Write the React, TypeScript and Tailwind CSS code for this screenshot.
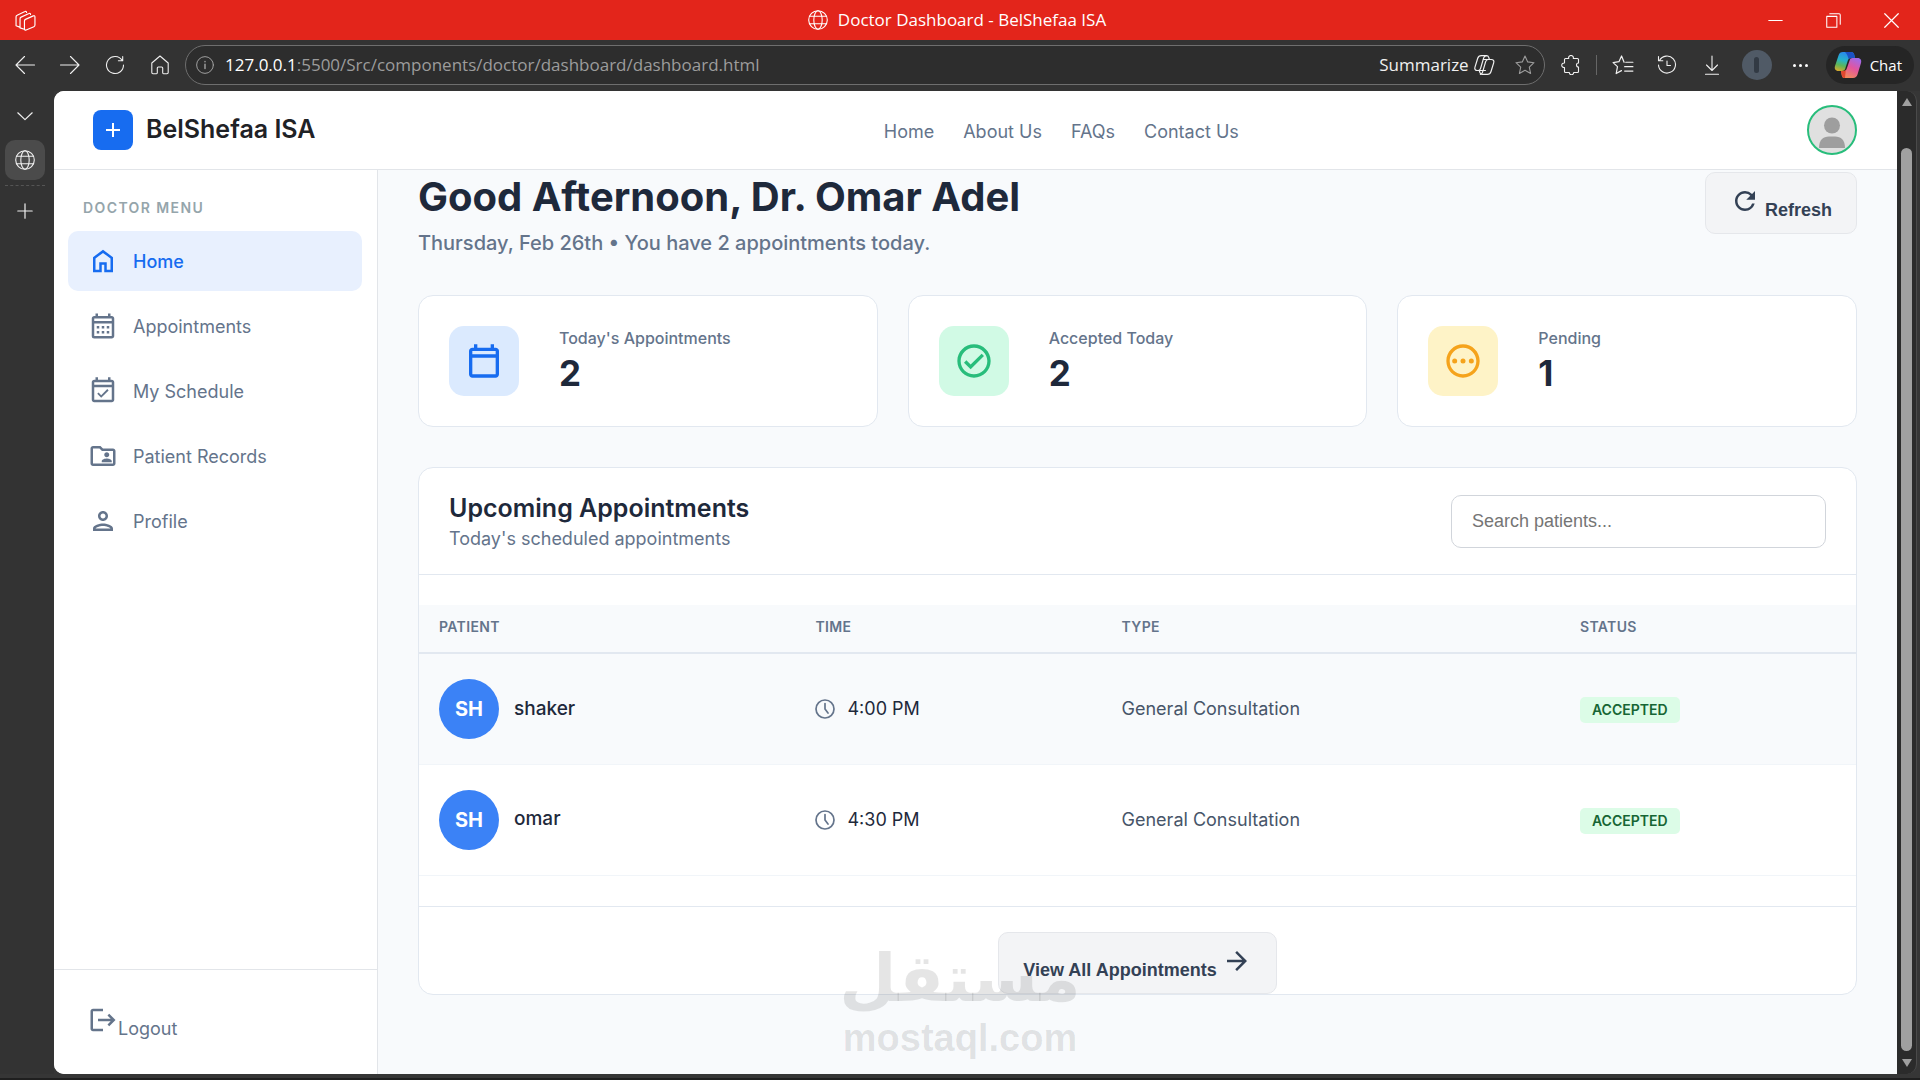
import type { ReactNode } from 'react';
import {
  MdArrowForward,
  MdLogout,
  MdOutlineCalendarMonth,
  MdOutlineCheckCircle,
  MdOutlineEventAvailable,
  MdOutlineFolderShared,
  MdOutlinePending,
  MdOutlinePerson,
  MdRefresh,
} from 'react-icons/md';

const uiFont = "font-['Open_Sans','Noto_Sans',sans-serif]";
const buttonFont = "font-['Liberation_Sans',Arial,sans-serif]";

interface LineIconProps {
  className?: string;
  children: ReactNode;
}

function LineIcon({ className = 'size-5', children }: LineIconProps) {
  return (
    <svg
      viewBox="0 0 20 20"
      fill="none"
      stroke="currentColor"
      strokeWidth="1.1"
      strokeLinecap="round"
      strokeLinejoin="round"
      className={`shrink-0 ${className}`}
      aria-hidden="true"
    >
      {children}
    </svg>
  );
}

function GlobeIcon() {
  return (
    <LineIcon>
      <circle cx="10" cy="10" r="9.3" />
      <ellipse cx="10" cy="10" rx="4.2" ry="9.3" />
      <path d="M1.6 6.3h16.8M1.6 13.7h16.8" />
    </LineIcon>
  );
}

function CopilotOutline() {
  return (
    <LineIcon className="size-[22px]">
      <path d="M7.5 1.500h4.700c1.200 0 1.800.6 2.100 1.600l.6 1.900h1.700c1.900 0 2.800 1.300 2.200 3.100l-2.500 8c-.5 1.600-1.500 2.400-3.200 2.400H8.400c-1.200 0-1.800-.6-2.100-1.600L5.700 15H4c-1.900 0-2.800-1.300-2.200-3.100l2.500-8c.5-1.600 1.500-2.400 3.200-2.400Z" />
      <path d="M12.200 1.500c-1.300 0-2.100.6-2.500 2L6.900 13c-.4 1.400-.8 2-2.200 2M14.900 5h-1.200c-1.400 0-1.800.6-2.200 2l-2.800 9.500c-.4 1.400-1 2-2 2M9.300 5h4.500M6.500 15h4.800" />
    </LineIcon>
  );
}

function CopilotColor() {
  return (
    <svg viewBox="0 0 28 28" className="size-7 shrink-0" fill="none" aria-hidden="true">
      <defs>
        <linearGradient id="copilotLeft" x1="12" y1="1" x2="6" y2="22" gradientUnits="userSpaceOnUse">
          <stop offset="0" stopColor="#2a86f0" />
          <stop offset="0.4" stopColor="#27b3c9" />
          <stop offset="0.65" stopColor="#5bb55a" />
          <stop offset="1" stopColor="#f5a623" />
        </linearGradient>
        <linearGradient id="copilotRight" x1="24" y1="7" x2="14" y2="27" gradientUnits="userSpaceOnUse">
          <stop offset="0" stopColor="#9a6cf0" />
          <stop offset="0.5" stopColor="#e2559f" />
          <stop offset="1" stopColor="#f08a5b" />
        </linearGradient>
      </defs>
      <path
        d="M9 1h8c2 0 2.700 1 3.200 2.600L21 7h-4c-1.600 0-2.600.8-3.200 2.600l-2.600 8.200C10.600 19.600 9.600 20 8 20H4.500C1.300 20 .2 17.600 1 15L4.500 4.400C5.200 2.200 6.600 1 9 1Z"
        fill="url(#copilotLeft)"
      />
      <path d="M14 1h3c2 0 2.700 1 3.200 2.600L21 7h-4c-1 0-1.800.3-2.400 1C14 5.500 13 3 11 1Z" fill="#1b52c4" />
      <path
        d="M19 27h-8c-2 0-2.700-1-3.200-2.600L7 20h2c2 0 3.200-.8 3.800-2.600l2.800-8C16.200 7.700 17 7 18.500 7h5c3.200 0 4.300 2.400 3.500 5l-3.500 11.600C22.800 25.800 21.400 27 19 27Z"
        fill="url(#copilotRight)"
      />
      <path d="M7 20h2c1 0 2-.2 2.800-.9L11 27c-2 0-2.700-1-3.200-2.600Z" fill="#e0482f" />
    </svg>
  );
}

function HomeGlyph() {
  return (
    <svg viewBox="0 0 24 24" fill="currentColor" className="size-[30px] shrink-0" aria-hidden="true">
      <path d="M6 19h3v-6h6v6h3v-9l-6-4.500L6 10v9Zm-2 2V9l8-6 8 6v12h-7v-6h-2v6H4Z" />
    </svg>
  );
}

function CalendarGlyph() {
  return (
    <svg viewBox="0 0 24 24" fill="currentColor" className="size-10 shrink-0" aria-hidden="true">
      <path d="M5 22q-.8 0-1.400-.6T3 20V6q0-.8.600-1.400T5 4h1V2h2v2h8V2h2v2h1q.8 0 1.400.6T21 6v14q0 .8-.6 1.400T19 22H5Zm0-2h14V10H5v10ZM5 8h14V6H5v2Z" />
    </svg>
  );
}

function ClockGlyph() {
  return (
    <LineIcon className="size-5 text-[#64748b]">
      <circle cx="10" cy="10" r="9" strokeWidth="1.700" />
      <path d="M10 4.500V10l3 4" strokeWidth="1.700" />
    </LineIcon>
  );
}

function TitleBar() {
  return (
    <div className={`flex h-10 shrink-0 items-center justify-between bg-[#e3251b] px-[15px] text-white ${uiFont}`}>
      <div className="flex flex-1">
        <LineIcon className="size-[21px]">
          <path d="M1 15V6.500c0-.8.300-1.200 1-1.500l7.500-3.500c.8-.4 1.500 0 1.500.8M4.800 17V8.300c0-.8.300-1.200 1-1.500l7.500-3.400c.8-.4 1.500 0 1.500.8M1 15l3.500 1.300M4.800 17l4 1.400" />
          <path d="M9 10.500c0-.8.300-1.300 1-1.600l7.400-3.300c.9-.4 1.600 0 1.600 1v7.700c0 .8-.3 1.300-1 1.600l-7.400 3.100c-.9.4-1.600 0-1.600-.9v-7.600Z" />
        </LineIcon>
      </div>
      <div className="flex items-center gap-[10px] text-[17px]">
        <GlobeIcon />
        <span>Doctor Dashboard - BelShefaa ISA</span>
      </div>
      <div className="flex flex-1 items-center justify-end gap-[43px] pr-[6px]">
        <button aria-label="Minimize">
          <LineIcon className="size-[15px]">
            <path d="M1 10h18" strokeWidth="1.400" />
          </LineIcon>
        </button>
        <button aria-label="Restore">
          <LineIcon className="size-[15px]">
            <path d="M1 4.500h13.500v14.500H1zM5 1h12.500c1 0 1.500.5 1.500 1.500V15" strokeWidth="1.400" />
          </LineIcon>
        </button>
        <button aria-label="Close">
          <LineIcon className="size-[15px]">
            <path d="M1 1l18 18M19 1 1 19" strokeWidth="1.600" />
          </LineIcon>
        </button>
      </div>
    </div>
  );
}

function Toolbar() {
  return (
    <div className={`flex h-[51px] shrink-0 items-center bg-[#333333] pr-[6px] pb-px pl-[15px] text-[#f0f0f0] ${uiFont}`}>
      <div className="flex items-center gap-[25px]">
        <button aria-label="Back">
          <LineIcon>
            <path d="M9.500 1.500 1 10l8.500 8.500M1 10h18.500" />
          </LineIcon>
        </button>
        <button aria-label="Forward">
          <LineIcon>
            <path d="M10.500 1.500 19 10l-8.500 8.500M19 10H.5" />
          </LineIcon>
        </button>
        <button aria-label="Reload">
          <LineIcon>
            <path d="M17.200 5.500A8.500 8.500 0 1 0 18.500 10M17.700 1.500v4.300h-4.300" />
          </LineIcon>
        </button>
        <button aria-label="Browser home">
          <LineIcon>
            <path d="M10 1 1.800 8v9.500c0 .7.400 1.200 1.200 1.200h3.500c.5 0 .8-.4.8-.9V13c0-.6.400-1 1-1h3.400c.6 0 1 .4 1 1v4.800c0 .5.300.9.800.9H17c.8 0 1.200-.5 1.200-1.200V8Z" />
          </LineIcon>
        </button>
      </div>
      <div className="ml-[15px] flex h-10 min-w-0 flex-1 items-center rounded-full border border-[#6e6e6e] bg-[#2d2d2d] pr-[9px] pl-[10px] text-[17px]">
        <LineIcon className="size-[18px] text-[#a0a0a0]">
          <circle cx="10" cy="10" r="9.300" />
          <path d="M10 9v5M10 6v.4" strokeWidth="1.600" />
        </LineIcon>
        <p className="ml-[11px] flex-1 truncate text-[#9c9c9c]">
          <span className="text-white">127.0.0.1</span>:5500/Src/components/doctor/dashboard/dashboard.html
        </p>
        <button className="flex items-center gap-1">
          Summarize
          <CopilotOutline />
        </button>
        <button aria-label="Favorite" className="ml-5 text-[#9c9c9c]">
          <LineIcon>
            <path d="m10 1 2.700 5.900 6.300.8-4.700 4.400 1.300 6.400-5.600-3.200-5.600 3.200 1.300-6.400L1 7.700l6.300-.8Z" />
          </LineIcon>
        </button>
      </div>
      <div className="ml-4 flex items-center">
        <button aria-label="Extensions">
          <LineIcon>
            <path d="M4.500 3.500h3.200a2.400 2.400 0 1 1 4.600 0h4.200c.6 0 1 .4 1 1V8a2 2 0 1 0 0 4v4.500c0 .6-.4 1-1 1h-3.800a2.200 2.200 0 0 1-4.400 0H4.500c-.6 0-1-.4-1-1v-4a2.300 2.300 0 1 1 0-4.500v-3.500c0-.6.4-1 1-1Z" />
          </LineIcon>
        </button>
        <span className="mx-[15px] h-5 w-px bg-[#666666]" />
        <button aria-label="Favorites list">
          <LineIcon className="size-[22px]">
            <path d="M11 7.500 8.700 1.800 6.300 7 1 7.800l4 3.700-1.200 6.300 4.800-2.700M12.500 7.500h6.500M11.500 11.500H19M11.500 15.500H19" />
          </LineIcon>
        </button>
        <button aria-label="History" className="ml-[23px]">
          <LineIcon>
            <path d="M2.500 5.500A8.500 8.500 0 1 1 1.500 10M1.500 1.500v4.300h4.300M10 6v4.500h3.500" />
          </LineIcon>
        </button>
        <button aria-label="Downloads" className="ml-[25px]">
          <LineIcon>
            <path d="M10 1v14M4.500 10 10 15.500 15.500 10M3.500 19.300h13" />
          </LineIcon>
        </button>
        <button aria-label="Browser profile" className="ml-5 flex size-[30px] items-center justify-center rounded-full bg-[#505a66]">
          <span className="h-4 w-[5px] rounded-full bg-[#323a44]" />
        </button>
        <button aria-label="Settings and more" className="ml-[21px] flex gap-[3px]">
          <span className="size-[3px] rounded-full bg-white" />
          <span className="size-[3px] rounded-full bg-white" />
          <span className="size-[3px] rounded-full bg-white" />
        </button>
        <button className="ml-[18px] flex h-[38px] items-center gap-2 rounded-full bg-[#252525] pr-3 pl-2 text-[15px] text-white">
          <CopilotColor />
          Chat
        </button>
      </div>
    </div>
  );
}

function TabRail() {
  return (
    <div className="flex w-[54px] shrink-0 flex-col items-start bg-[#333333] pt-[15px] pl-[5px] text-[#f0f0f0]">
      <button aria-label="Tab actions" className="flex h-5 w-10 items-center justify-center">
        <LineIcon className="size-4">
          <path d="m1 6 9 8.500L19 6" strokeWidth="1.500" />
        </LineIcon>
      </button>
      <button aria-label="Doctor Dashboard tab" className="mt-[14px] flex size-10 items-center justify-center rounded-[10px] bg-[#4b4b4b]">
        <GlobeIcon />
      </button>
      <div className="mt-[5px] w-10 border-t border-dashed border-[#555555]" />
      <button aria-label="New tab" className="mt-[15px] flex h-5 w-10 items-center justify-center">
        <LineIcon className="size-4">
          <path d="M10 1v18M1 10h18" strokeWidth="1.500" />
        </LineIcon>
      </button>
    </div>
  );
}

function SiteHeader() {
  return (
    <header className="flex h-[79px] shrink-0 items-center justify-between border-b border-[#e2e5e9] bg-white pr-10 pl-[39px]">
      <div className="flex items-center gap-[13px]">
        <div className="flex size-10 items-center justify-center rounded-lg bg-[#176cf0]">
          <svg viewBox="0 0 14 14" className="size-[14px]" aria-hidden="true">
            <path d="M7 0v14M0 7h14" stroke="white" strokeWidth="2" />
          </svg>
        </div>
        <span className="text-[25px] font-semibold text-[#1f2226]">BelShefaa ISA</span>
      </div>
      <nav className="flex gap-[29px] pt-[2px] text-[18px] text-[#64748b]">
        <a href="#home">Home</a>
        <a href="#about">About Us</a>
        <a href="#faqs">FAQs</a>
        <a href="#contact">Contact Us</a>
      </nav>
      <button aria-label="Account" className="size-[50px] overflow-hidden rounded-full border-2 border-[#28bd7b] bg-[#e0e0e0]">
        <svg viewBox="0 0 46 46" fill="#9e9e9e" aria-hidden="true">
          <circle cx="23" cy="18.500" r="8" />
          <path d="M10 41c0-8 4-11.500 10-11.500h6c6 0 10 3.500 10 11.500Z" />
        </svg>
      </button>
    </header>
  );
}

const menu = [
  { label: 'Home', icon: <HomeGlyph />, active: true },
  { label: 'Appointments', icon: <MdOutlineCalendarMonth className="size-[30px]" /> },
  { label: 'My Schedule', icon: <MdOutlineEventAvailable className="size-[30px]" /> },
  { label: 'Patient Records', icon: <MdOutlineFolderShared className="size-[30px]" /> },
  { label: 'Profile', icon: <MdOutlinePerson className="size-[30px]" /> },
];

function Sidebar() {
  return (
    <aside className="flex w-[324px] shrink-0 flex-col border-r border-[#e2e5e9] bg-white">
      <nav className="flex flex-1 flex-col pt-[26px] pr-[15px] pl-[14px]">
        <h2 className="mb-[11px] pl-[15px] text-[14px] leading-6 font-semibold tracking-widest text-[#95a5ab]">DOCTOR MENU</h2>
        <ul className="flex flex-col gap-[5px]">
          {menu.map((item) => (
            <li key={item.label}>
              <a
                href="#menu"
                className={`flex h-[60px] items-center gap-[15px] rounded-[10px] px-5 text-[18px] ${
                  item.active ? 'bg-[#e8f0fe] font-medium text-[#176cf0]' : 'text-[#64748b]'
                }`}
              >
                {item.icon}
                {item.label}
              </a>
            </li>
          ))}
        </ul>
      </nav>
      <div className="border-t border-[#e2e5e9] px-[34px] pt-[35px] pb-9">
        <button className="flex items-start text-[18px] text-[#64748b]">
          <MdLogout className="size-[30px]" />
          <span className="mt-[15px] leading-[18px]">Logout</span>
        </button>
      </div>
    </aside>
  );
}

const stats = [
  {
    label: "Today's Appointments",
    value: 2,
    tile: 'bg-[#dbeafe] text-[#176cf0]',
    icon: <CalendarGlyph />,
  },
  {
    label: 'Accepted Today',
    value: 2,
    tile: 'bg-[#d1fae5] text-[#28bd7b]',
    icon: <MdOutlineCheckCircle className="size-10" />,
  },
  {
    label: 'Pending',
    value: 1,
    tile: 'bg-[#fef3c7] text-[#f5a31c]',
    icon: <MdOutlinePending className="size-10" />,
  },
];

const appointments = [
  { initials: 'SH', name: 'shaker', time: '4:00 PM', type: 'General Consultation', status: 'ACCEPTED' },
  { initials: 'SH', name: 'omar', time: '4:30 PM', type: 'General Consultation', status: 'ACCEPTED' },
];

function AppointmentsTable() {
  return (
    <table className="w-full table-fixed text-left">
      <colgroup>
        <col className="w-[26.2%]" />
        <col className="w-[21.3%]" />
        <col className="w-[31.9%]" />
        <col className="w-[20.6%]" />
      </colgroup>
      <thead>
        <tr className="h-12 border-b-2 border-[#e2e8f0] bg-[#f8fafc] text-[14px] tracking-wide text-[#64748b]">
          <th className="px-5 pb-1 font-semibold">PATIENT</th>
          <th className="px-5 pb-1 font-semibold">TIME</th>
          <th className="px-5 pb-1 font-semibold">TYPE</th>
          <th className="px-5 pb-1 font-semibold">STATUS</th>
        </tr>
      </thead>
      <tbody className="text-[18px]">
        {appointments.map((item, index) => (
          <tr key={item.name} className={`h-[111px] border-b border-[#f1f5f9] ${index === 0 ? 'bg-[#f8fafc]' : ''}`}>
            <td className="px-5">
              <div className="flex items-center gap-[15px]">
                <span className="flex size-[60px] items-center justify-center rounded-full bg-[#3b82f6] text-[20px] font-bold text-white">
                  {item.initials}
                </span>
                <span className="text-[19px] font-medium text-[#1e293b]">{item.name}</span>
              </div>
            </td>
            <td className="px-5">
              <div className="flex items-center gap-3 text-[#1e293b]">
                <ClockGlyph />
                {item.time}
              </div>
            </td>
            <td className="px-5 text-[#475569]">{item.type}</td>
            <td className="px-5">
              <span className="inline-block rounded-[5px] bg-[#dcfce7] px-3 text-[14px] leading-[26px] font-semibold text-[#166534]">
                {item.status}
              </span>
            </td>
          </tr>
        ))}
      </tbody>
    </table>
  );
}

function Dashboard() {
  return (
    <main className="relative min-w-0 flex-1 overflow-hidden bg-[#f8fafc] px-10">
      <div className="flex items-start justify-between">
        <div>
          <h1 className="text-[40px] leading-[54px] font-bold text-[#1e293b]">Good Afternoon, Dr. Omar Adel</h1>
          <p className="mt-1 text-[20px] leading-[30px] font-medium text-[#64748b]">
            Thursday, Feb 26th • You have 2 appointments today.
          </p>
        </div>
        <button className={`mt-[2px] flex h-[62px] items-start rounded-[10px] border border-[#e5e7eb] bg-[#f3f4f6] px-6 text-[18px] font-bold text-[#334155] ${buttonFont}`}>
          <MdRefresh className="mt-[13px] size-[30px]" />
          <span className="mt-[27px] ml-[5px] leading-5">Refresh</span>
        </button>
      </div>

      <section className="mt-[37px] grid grid-cols-3 gap-[30px]">
        {stats.map((stat) => (
          <div key={stat.label} className="flex items-center gap-10 rounded-[15px] border border-[#e2e8f0] bg-white p-[30px]">
            <div className={`flex size-[70px] items-center justify-center rounded-[15px] ${stat.tile}`}>{stat.icon}</div>
            <div>
              <p className="text-[16px] leading-6 font-medium text-[#64748b]">{stat.label}</p>
              <p className="text-[35px] leading-[46px] font-bold text-[#1e293b]">{stat.value}</p>
            </div>
          </div>
        ))}
      </section>

      <section className="mt-10 overflow-hidden rounded-[15px] border border-[#e2e8f0] bg-white">
        <div className="flex items-center justify-between border-b border-[#e2e8f0] px-[30px] py-[22px]">
          <div>
            <h2 className="text-[25px] leading-9 font-semibold text-[#1e293b]">Upcoming Appointments</h2>
            <p className="text-[18px] leading-[26px] text-[#64748b]">Today's scheduled appointments</p>
          </div>
          <input
            type="text"
            aria-label="Search patients"
            placeholder="Search patients..."
            className={`h-[53px] w-[375px] rounded-[10px] border border-[#d1d5db] bg-white px-5 text-[18px] placeholder:text-[#757575] ${buttonFont}`}
          />
        </div>
        <div className="py-[30px]">
          <AppointmentsTable />
        </div>
        <div className="flex justify-center border-t border-[#e2e8f0] pt-[25px]">
          <button className={`flex h-[62px] items-start rounded-[10px] border border-[#e5e7eb] bg-[#f3f4f6] px-6 text-[18px] font-bold text-[#334155] ${buttonFont}`}>
            <span className="mt-[27px] mr-[5px] leading-5">View All Appointments</span>
            <MdArrowForward className="mt-[13px] size-[30px]" />
          </button>
        </div>
      </section>

      {/* Watermark */}
      <div className="pointer-events-none absolute bottom-4 left-[467px] flex w-[230px] flex-col items-center leading-none text-black/10">
        <span lang="ar" dir="rtl" className="font-['DejaVu_Sans',sans-serif] text-[66px] leading-[78px] font-bold">
          مستقل
        </span>
        <span className="font-['Liberation_Sans',Arial,sans-serif] text-[38px] leading-10 font-bold">mostaql.com</span>
      </div>
    </main>
  );
}

function Scrollbar() {
  return (
    <div className="flex w-5 shrink-0 flex-col items-center rounded-r-[10px] border-r border-[#4a4a4a] bg-[#2b2b2b] py-[7px]">
      <svg viewBox="0 0 10 8" className="h-2 w-[10px]" fill="#a0a0a0" aria-hidden="true">
        <path d="M5 0 10 8H0Z" />
      </svg>
      <div className="mt-[42px] mb-2 w-[11px] flex-1 rounded-full bg-[#a0a0a0]" />
      <svg viewBox="0 0 10 8" className="h-2 w-[10px]" fill="#a0a0a0" aria-hidden="true">
        <path d="M0 0h10L5 8Z" />
      </svg>
    </div>
  );
}

export default function App() {
  return (
    <div className="flex h-screen flex-col border-b-2 border-[#1f1f1f] bg-[#363636] font-['Inter',sans-serif]">
      <TitleBar />
      <Toolbar />
      <div className="flex min-h-0 flex-1 pr-[3px] pb-1">
        <TabRail />
        <div className="flex min-w-0 flex-1 flex-col overflow-hidden rounded-l-[10px] bg-white">
          <SiteHeader />
          <div className="flex min-h-0 flex-1">
            <Sidebar />
            <Dashboard />
          </div>
        </div>
        <Scrollbar />
      </div>
    </div>
  );
}
